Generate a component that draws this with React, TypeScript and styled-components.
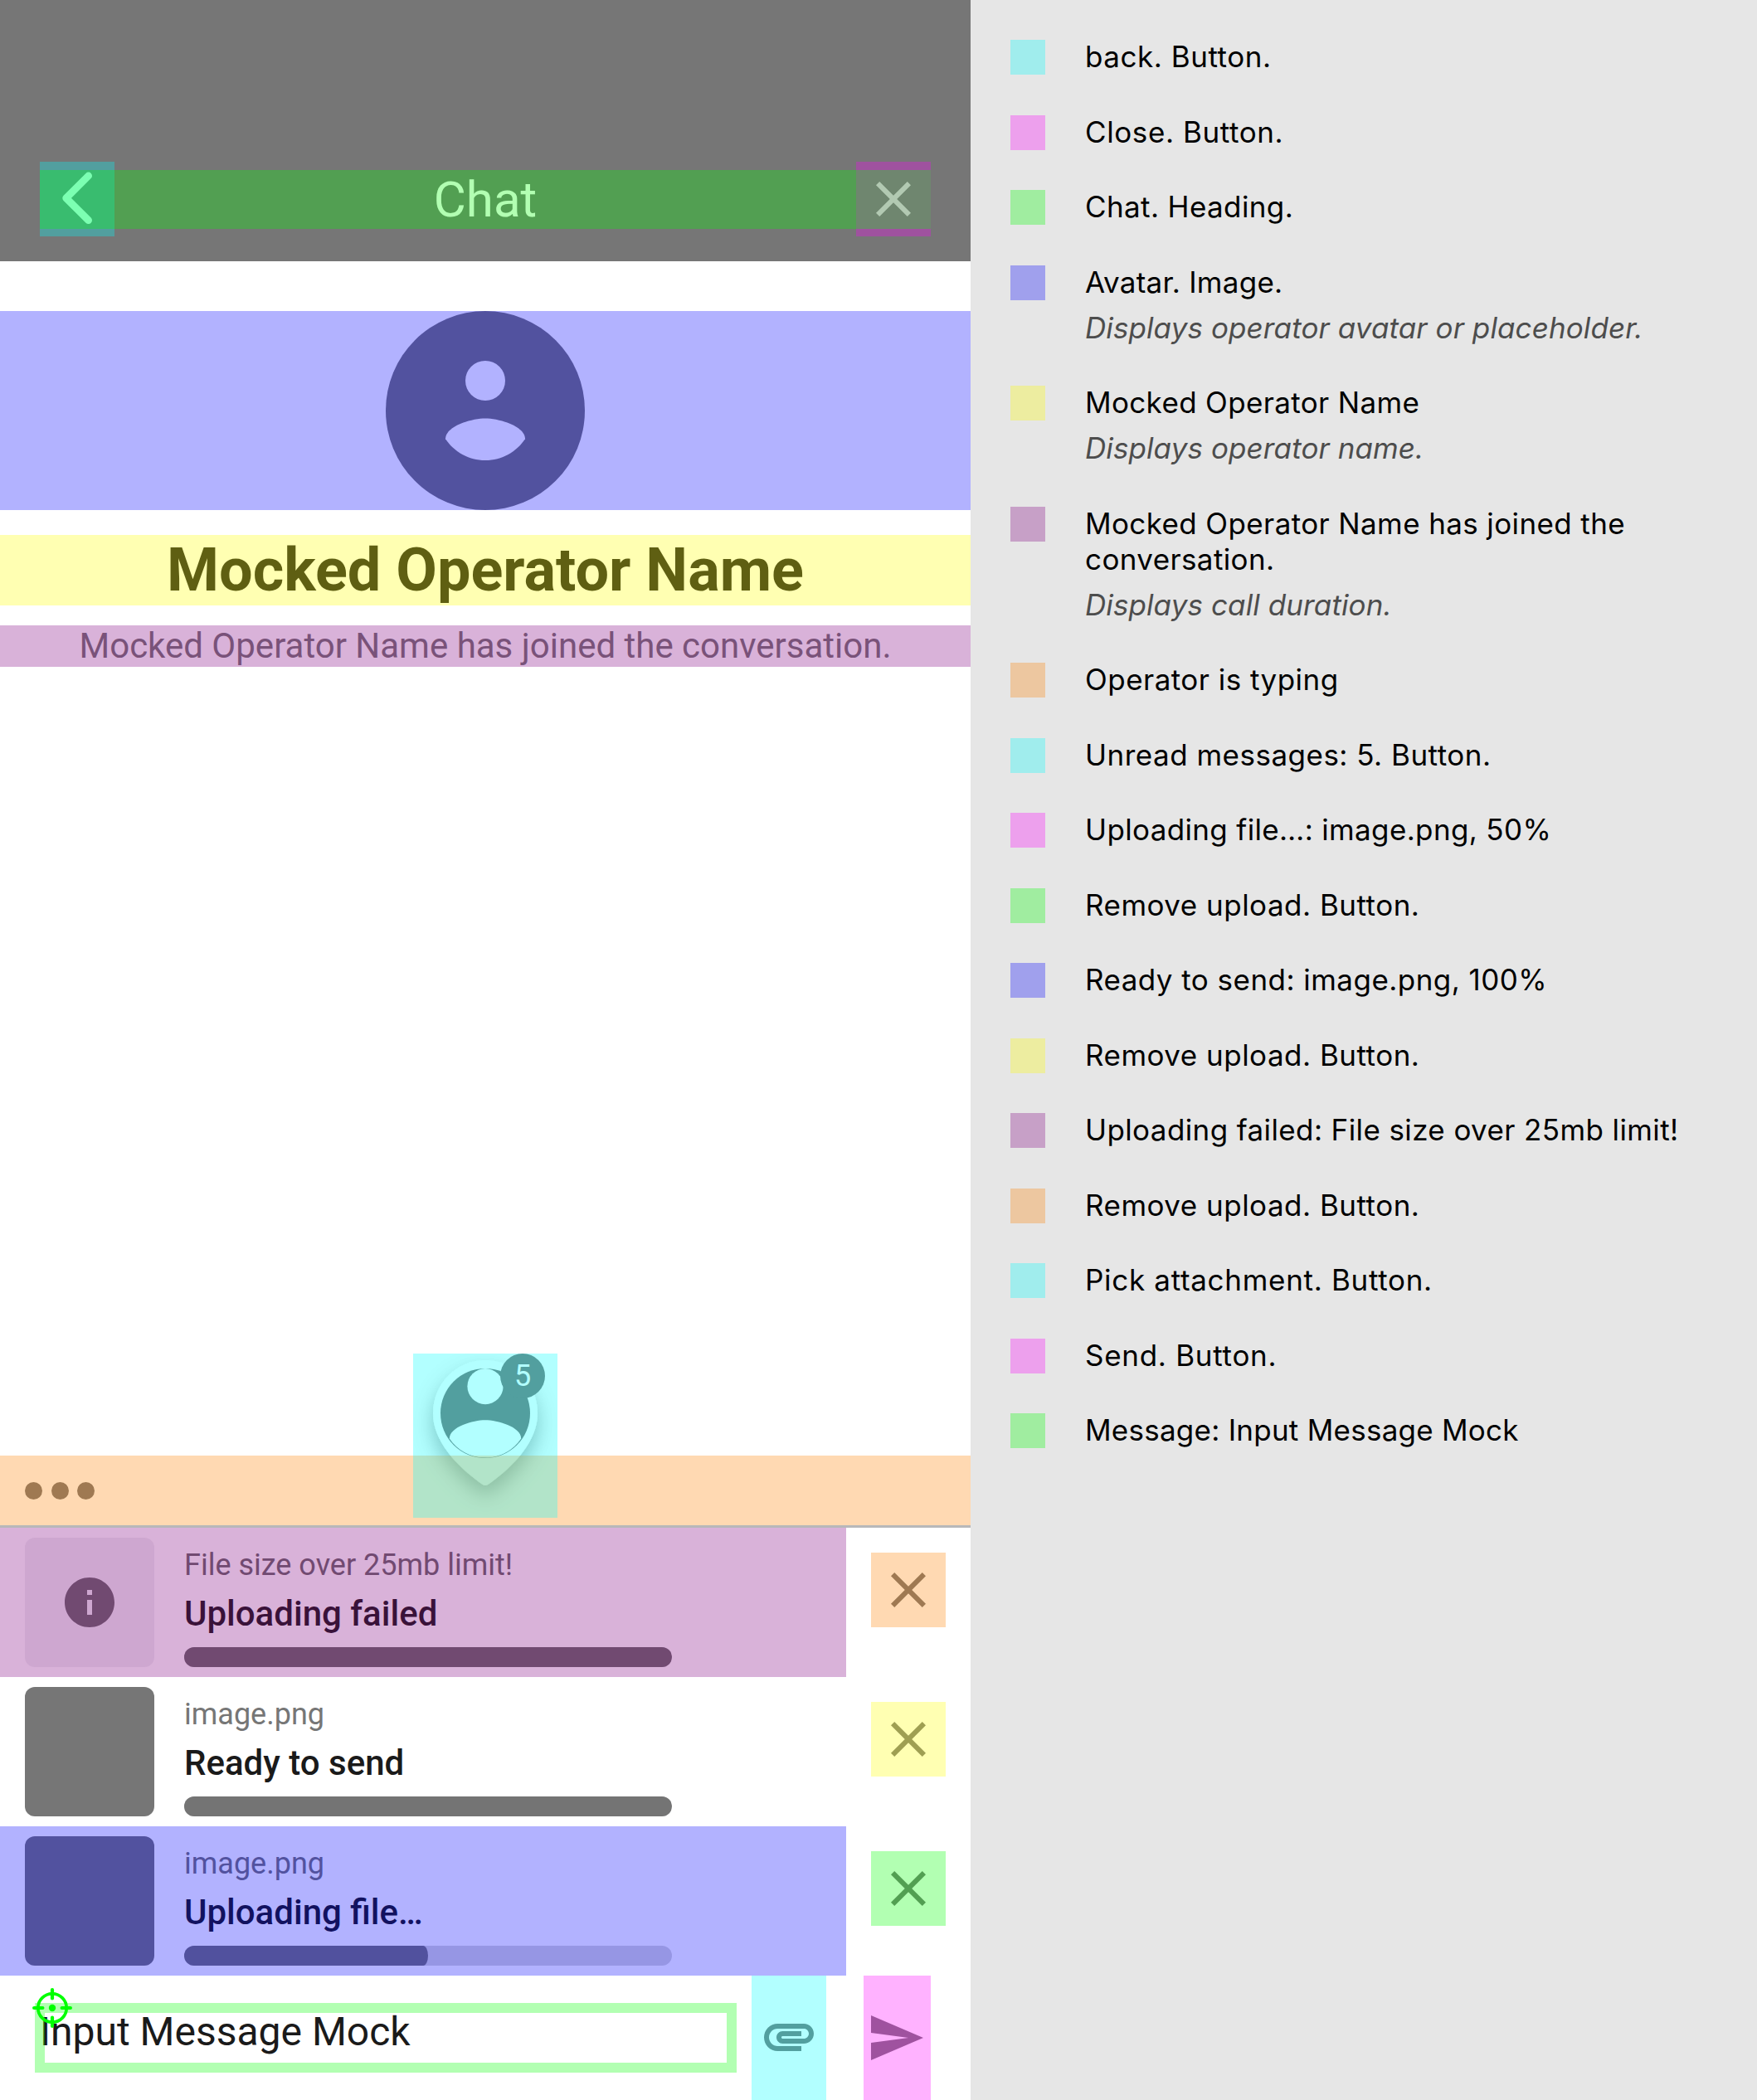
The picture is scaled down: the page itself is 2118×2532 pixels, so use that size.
import React from 'react';
import styled, { createGlobalStyle, css } from 'styled-components';

const tint = {
  cyan: 'rgba(0, 255, 255, 0.3)',
  magenta: 'rgba(255, 0, 255, 0.3)',
  green: 'rgba(0, 255, 0, 0.3)',
  blue: 'rgba(0, 0, 255, 0.3)',
  yellow: 'rgba(255, 255, 0, 0.3)',
  purple: 'rgba(128, 0, 128, 0.3)',
  orange: 'rgba(255, 128, 0, 0.3)',
};
type Tint = keyof typeof tint;

const GRAY = '#767676';
const FAILED = '#6a6a6b';
const INK = '#1a1a1a';

const GlobalStyle = createGlobalStyle`
  *, *::before, *::after { box-sizing: border-box; }
  body { margin: 0; background: #e6e6e6; }
  svg { display: block; }
`;

/* Translucent accessibility marker painted over an element. */
const marked = css<{ $tint?: Tint }>`
  position: relative;
  &::after {
    content: '';
    position: absolute;
    inset: 0;
    pointer-events: none;
    background: ${(p) => (p.$tint ? tint[p.$tint] : 'transparent')};
  }
`;

const Page = styled.div`
  display: grid;
  grid-template-columns: 1170px 1fr;
  height: 2532px;
  background: #e6e6e6;
`;

const Phone = styled.main`
  display: flex;
  flex-direction: column;
  background: #fff;
  color: ${INK};
  font-family: Roboto, sans-serif;
`;

const Header = styled.header`
  display: grid;
  grid-template-columns: 90px 1fr 90px;
  height: 315px;
  padding: 195px 48px 30px;
  background: ${GRAY};
`;

const IconButton = styled.div<{ $tint: Tint; $col?: number }>`
  ${marked}
  grid-row: 1;
  grid-column: ${(p) => p.$col ?? 'auto'};
  display: flex;
  align-items: center;
  justify-content: center;
  width: 90px;
  height: 90px;
`;

const Heading = styled.h1<{ $tint: Tint }>`
  ${marked}
  grid-row: 1;
  grid-column: 1 / -1;
  z-index: 1;
  height: 71px;
  margin: 10px 0 0;
  color: #fff;
  font-size: 60px;
  font-weight: 400;
  line-height: 71px;
  text-align: center;
`;

const Operator = styled.section`
  flex: 1;
  padding-top: 60px;
`;

const Avatar = styled.div<{ $tint: Tint }>`
  ${marked}
  display: flex;
  justify-content: center;
  height: 240px;
`;

const OperatorName = styled.h2<{ $tint: Tint }>`
  ${marked}
  height: 85px;
  margin: 30px 0 24px;
  font-size: 72px;
  font-weight: 700;
  line-height: 85px;
  text-align: center;
`;

const Joined = styled.p<{ $tint: Tint }>`
  ${marked}
  height: 50px;
  margin: 0;
  color: ${GRAY};
  font-size: 42px;
  line-height: 50px;
  text-align: center;
`;

const TypingBar = styled.div`
  position: relative;
  height: 84px;
`;

const Typing = styled.div<{ $tint: Tint }>`
  ${marked}
  display: flex;
  align-items: center;
  gap: 10.5px;
  height: 84px;
  padding-left: 30px;
`;

const Dot = styled.i`
  width: 21px;
  height: 21px;
  border-radius: 50%;
  background: ${GRAY};
`;

/* The artwork sits below the typing marker, while its own marker lies above it. */
const Bubble = styled.div`
  position: absolute;
  left: 498px;
  bottom: 9px;
  width: 174px;
  height: 198px;
  overflow: hidden;
`;

const BubbleMarker = styled.div<{ $tint: Tint }>`
  position: absolute;
  left: 498px;
  bottom: 9px;
  width: 174px;
  height: 198px;
  background: ${(p) => tint[p.$tint]};
`;

const Badge = styled.span`
  position: absolute;
  top: 0;
  right: 15px;
  width: 54px;
  height: 54px;
  border-radius: 50%;
  background: ${GRAY};
  color: #fff;
  font-size: 36px;
  line-height: 54px;
  text-align: center;
`;

const Uploads = styled.section`
  border-top: 3px solid #b8b8b9;
`;

const UploadRow = styled.div`
  display: grid;
  grid-template-columns: 1020px 90px;
  column-gap: 30px;
  height: 180px;
`;

const UploadInfo = styled.div<{ $tint?: Tint }>`
  ${marked}
  display: flex;
  padding: 12px 30px;
  gap: 36px;
`;

const RemoveSlot = styled.div`
  padding-top: 30px;
`;

const Thumb = styled.div<{ $failed?: boolean }>`
  display: flex;
  align-items: center;
  justify-content: center;
  width: 156px;
  height: 156px;
  border-radius: 12px;
  background: ${(p) => (p.$failed ? '#f0f0f2' : GRAY)};
`;

const UploadText = styled.div`
  display: flex;
  flex-direction: column;
  width: 588px;
  padding-top: 12px;
`;

const FileName = styled.div<{ $failed?: boolean }>`
  color: ${(p) => (p.$failed ? FAILED : GRAY)};
  font-size: 36px;
  line-height: 42px;
`;

const Status = styled.div`
  margin: 13px 0 16px;
  font-size: 42px;
  font-weight: 500;
  line-height: 49px;
`;

const Track = styled.div`
  height: 24px;
  border-radius: 12px;
  background: #d7d7d9;
  overflow: hidden;
`;

const Fill = styled.div<{ $failed?: boolean }>`
  height: 24px;
  border-radius: 0 6px 6px 0 / 0 12px 12px 0;
  background: ${(p) => (p.$failed ? FAILED : '#747474')};
`;

const Composer = styled.footer`
  display: flex;
  height: 150px;
  padding-left: 42px;
`;

const MessageInput = styled.div`
  position: relative;
  width: 846px;
  height: 84px;
  margin: 33px 18px 0 0;
  padding: 6px;
  font-size: 48px;
  line-height: 57px;
  &::after {
    content: '';
    position: absolute;
    inset: 0;
    border: 12px solid ${tint.green};
  }
`;

const Crosshair = styled.svg`
  position: absolute;
  z-index: 1;
  left: -3px;
  top: -18px;
`;

const ComposerAction = styled.div<{ $tint: Tint; $width: number; $before?: number }>`
  ${marked}
  display: flex;
  justify-content: center;
  width: ${(p) => p.$width}px;
  height: 150px;
  margin-left: ${(p) => p.$before ?? 0}px;
  overflow: hidden;
`;

const ActionIcon = styled.svg<{ $top: number; $shift?: number }>`
  flex: none;
  margin-top: ${(p) => p.$top}px;
  margin-left: ${(p) => p.$shift ?? 0}px;
`;

const Legend = styled.aside`
  padding: 48px;
  color: #000;
  font-family: Inter, 'Liberation Sans', sans-serif;
  font-size: 35px;
  line-height: 43px;
`;

const LegendItem = styled.div`
  display: grid;
  grid-template-columns: 42px 1fr;
  column-gap: 48px;
  margin-bottom: 48.5px;
`;

const Swatch = styled.div<{ $tint: Tint }>`
  width: 42px;
  height: 42px;
  background: ${(p) => tint[p.$tint]};
`;

const LegendText = styled.div`
  margin-top: -1px;
`;

const LegendLine = styled.div<{ $spacing: number }>`
  white-space: pre;
  letter-spacing: ${(p) => p.$spacing}px;
`;

const Hint = styled.div`
  margin-top: 12px;
  color: #4d4d4d;
  font-style: italic;
  letter-spacing: 0.1px;
`;

const CLOSE = 'M19 6.41L17.59 5 12 10.59 6.41 5 5 6.41 10.59 12 5 17.59 6.41 19 12 13.41 17.59 19 19 17.59 13.41 12z';

const CloseIcon = ({ color }: { color: string }) => (
  <svg width="72" height="72" viewBox="0 0 24 24" fill={color}>
    <path d={CLOSE} />
  </svg>
);

const BackIcon = () => (
  <svg width="90" height="90" viewBox="0 0 90 90" fill="none" stroke="#fff" strokeWidth="8.8" strokeLinecap="round" strokeLinejoin="round">
    <path d="M58.6 17 L31.7 43.8 L58.6 70.6" />
  </svg>
);

const InfoIcon = () => (
  <svg width="72" height="72" viewBox="0 0 24 24" fill={FAILED}>
    <path d="M12 2C6.48 2 2 6.48 2 12s4.48 10 10 10 10-4.48 10-10S17.52 2 12 2zm1 15h-2v-6h2v6zm0-8h-2V7h2v2z" />
  </svg>
);

const AvatarIcon = () => (
  <svg width="240" height="240" viewBox="0 0 240 240">
    <circle cx="120" cy="120" r="120" fill={GRAY} />
    <circle cx="120" cy="84" r="24" fill="#fff" />
    <path transform="translate(120 180) scale(8)" fill="#fff" d="M0 0c-2.5 0-4.71-1.28-6-3.22.03-1.99 4-3.08 6-3.08 1.99 0 5.97 1.09 6 3.08C4.71-1.28 2.5 0 0 0z" />
  </svg>
);

const PinIcon = () => (
  <svg width="174" height="198" viewBox="0 0 174 198">
    <defs>
      <filter id="pinShadow" x="-40%" y="-40%" width="180%" height="180%">
        <feDropShadow dx="0" dy="12" stdDeviation="12" floodColor="#000" floodOpacity="0.3" />
      </filter>
    </defs>
    <path
      filter="url(#pinShadow)"
      fill="#fff"
      d="M87 8C52 8 24 36.5 24 72C24 104 50 134 84 158Q87 160 90 158C124 134 150 104 150 72C150 36.5 122 8 87 8z"
    />
    <circle cx="87" cy="72" r="54" fill={GRAY} />
    <circle cx="87" cy="39.6" r="21.6" fill="#fff" />
    <path transform="translate(87 125.6) scale(7.2)" fill="#fff" d="M0 0c-2.5 0-4.71-1.28-6-3.22.03-1.99 4-3.08 6-3.08 1.99 0 5.97 1.09 6 3.08C4.71-1.28 2.5 0 0 0z" />
  </svg>
);

type Upload = { name: string; status: string; progress: number; failed?: boolean; rowTint?: Tint; removeTint: Tint };

const uploads: Upload[] = [
  { name: 'File size over 25mb limit!', status: 'Uploading failed', progress: 100, failed: true, rowTint: 'purple', removeTint: 'orange' },
  { name: 'image.png', status: 'Ready to send', progress: 100, removeTint: 'yellow' },
  { name: 'image.png', status: 'Uploading file…', progress: 50, rowTint: 'blue', removeTint: 'green' },
];

const legend: { color: Tint; text: string; spacing: number; hint?: string }[] = [
  { color: 'cyan', text: 'back. Button.', spacing: 0.54 },
  { color: 'magenta', text: 'Close. Button.', spacing: 0.6 },
  { color: 'green', text: 'Chat. Heading.', spacing: 0.38 },
  { color: 'blue', text: 'Avatar. Image.', spacing: 0.26, hint: 'Displays operator avatar or placeholder.' },
  { color: 'yellow', text: 'Mocked Operator Name', spacing: 0.34, hint: 'Displays operator name.' },
  { color: 'purple', text: 'Mocked Operator Name has joined the\nconversation.', spacing: 0.38, hint: 'Displays call duration.' },
  { color: 'orange', text: 'Operator is typing', spacing: 0.47 },
  { color: 'cyan', text: 'Unread messages: 5. Button.', spacing: 0.49 },
  { color: 'magenta', text: 'Uploading file…: image.png, 50%', spacing: 0.35 },
  { color: 'green', text: 'Remove upload. Button.', spacing: 0.49 },
  { color: 'blue', text: 'Ready to send: image.png, 100%', spacing: 0.46 },
  { color: 'yellow', text: 'Remove upload. Button.', spacing: 0.49 },
  { color: 'purple', text: 'Uploading failed: File size over 25mb limit!', spacing: 0.39 },
  { color: 'orange', text: 'Remove upload. Button.', spacing: 0.49 },
  { color: 'cyan', text: 'Pick attachment. Button.', spacing: 0.69 },
  { color: 'magenta', text: 'Send. Button.', spacing: 0.72 },
  { color: 'green', text: 'Message: Input Message Mock', spacing: 0.25 },
];

export default function App() {
  return (
    <>
      <GlobalStyle />
      <Page>
        <Phone>
          <Header>
            <IconButton $tint="cyan" $col={1}><BackIcon /></IconButton>
            <IconButton $tint="magenta" $col={3}><CloseIcon color="#fff" /></IconButton>
            <Heading $tint="green">Chat</Heading>
          </Header>

          <Operator>
            <Avatar $tint="blue"><AvatarIcon /></Avatar>
            <OperatorName $tint="yellow">Mocked Operator Name</OperatorName>
            <Joined $tint="purple">Mocked Operator Name has joined the conversation.</Joined>
          </Operator>

          <TypingBar>
            <Bubble>
              <PinIcon />
              <Badge>5</Badge>
            </Bubble>
            <Typing $tint="orange"><Dot /><Dot /><Dot /></Typing>
            <BubbleMarker $tint="cyan" />
          </TypingBar>

          <Uploads>
            {uploads.map((u) => (
              <UploadRow key={u.status}>
                <UploadInfo $tint={u.rowTint}>
                  <Thumb $failed={u.failed}>{u.failed && <InfoIcon />}</Thumb>
                  <UploadText>
                    <FileName $failed={u.failed}>{u.name}</FileName>
                    <Status>{u.status}</Status>
                    <Track><Fill $failed={u.failed} style={{ width: `${u.progress}%` }} /></Track>
                  </UploadText>
                </UploadInfo>
                <RemoveSlot>
                  <IconButton $tint={u.removeTint}><CloseIcon color={GRAY} /></IconButton>
                </RemoveSlot>
              </UploadRow>
            ))}
          </Uploads>

          <Composer>
            <MessageInput>
              Input Message Mock
              <Crosshair width="48" height="48" viewBox="0 0 48 48" fill="none" stroke="#00ff00" strokeLinecap="round">
                <circle cx="24" cy="24" r="17.2" strokeWidth="3.7" />
                <path d="M24 2.1V12.4M24 35.6V45.9M2.1 24H12.4M35.6 24H45.9" strokeWidth="4.2" />
                <circle cx="24" cy="24" r="4.2" fill="#00ff00" stroke="none" />
              </Crosshair>
            </MessageInput>
            <ComposerAction $tint="cyan" $width={90}>
              <ActionIcon $top={37} width="72" height="72" viewBox="0 0 24 24" fill={GRAY}>
                <path d="M2 12.5C2 9.46 4.46 7 7.5 7H18c2.21 0 4 1.79 4 4s-1.79 4-4 4H9.5C8.12 15 7 13.88 7 12.5S8.12 10 9.5 10H17v2H9.41c-.55 0-.55 1 0 1H18c1.1 0 2-.9 2-2s-.9-2-2-2H7.5C5.57 9 4 10.57 4 12.5S5.57 16 7.5 16H17v2H7.5C4.46 18 2 15.54 2 12.5z" />
              </ActionIcon>
            </ComposerAction>
            <ComposerAction $tint="magenta" $width={81} $before={45}>
              <ActionIcon $top={39} $shift={-3} width="72" height="72" viewBox="0 0 24 24" fill={GRAY}>
                <path d="M2.01 21L23 12 2.01 3 2 10l15 2-15 2z" />
              </ActionIcon>
            </ComposerAction>
          </Composer>
        </Phone>

        <Legend>
          {legend.map((item, i) => (
            <LegendItem key={i}>
              <Swatch $tint={item.color} />
              <LegendText>
                <LegendLine $spacing={item.spacing}>{item.text}</LegendLine>
                {item.hint && <Hint>{item.hint}</Hint>}
              </LegendText>
            </LegendItem>
          ))}
        </Legend>
      </Page>
    </>
  );
}
